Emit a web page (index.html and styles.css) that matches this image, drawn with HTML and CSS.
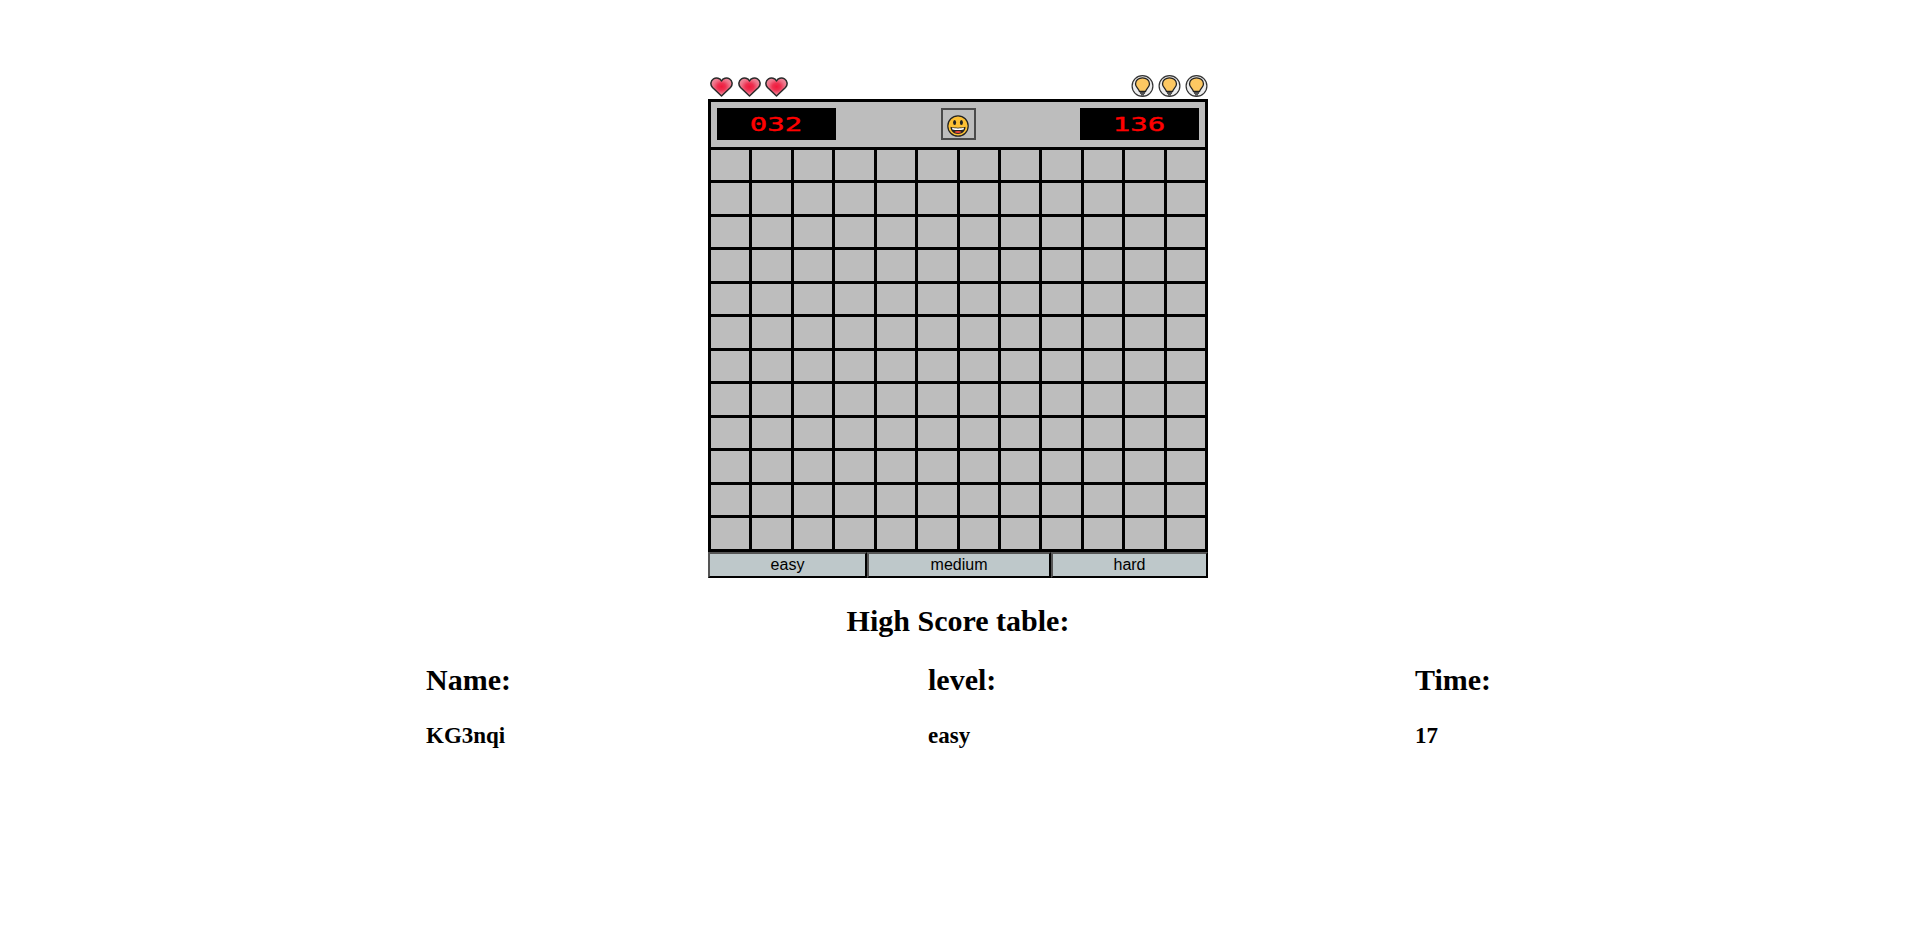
FILE: index.html
```html
<!DOCTYPE html>
<html lang="en">
<head>
    <meta charset="UTF-8">
    <meta name="viewport" content="width=device-width, initial-scale=1.0">
    <title>Minesweeper</title>
    <link rel="stylesheet" href="styles.css">
</head>
<body>
    <svg class="defs" width="0" height="0">
        <defs>
            <radialGradient id="heartFill" cx="50%" cy="48%" r="54%">
                <stop offset="0%" stop-color="#f01a3c"/>
                <stop offset="35%" stop-color="#ee3050"/>
                <stop offset="70%" stop-color="#ee7086"/>
                <stop offset="100%" stop-color="#ee8c9e"/>
            </radialGradient>
            <symbol id="heart" viewBox="0 0 23 20">
                <path d="M11.500 19 L2.500 10.500 C0 8 0.500 3.500 3.500 1.800 C6.500 0.300 10 1.300 11.500 4 C13 1.300 16.500 0.300 19.500 1.800 C22.500 3.500 23 8 20.500 10.500 Z" fill="url(#heartFill)" stroke="#2a2a2a" stroke-width="1.500" stroke-linejoin="round"/>
            </symbol>
            <symbol id="bulb" viewBox="0 0 23 22">
                <circle cx="11.500" cy="11" r="10.400" fill="#ededed" stroke="#333" stroke-width="1.200"/>
                <path d="M11.500 2.800 C7.500 2.800 4.500 5.300 4.500 9 C4.500 12 7.500 13.500 8.500 16.500 L14.500 16.500 C15.500 13.500 18.500 12 18.500 9 C18.500 5.300 15.500 2.800 11.500 2.800 Z" fill="#fdc862" stroke="#222" stroke-width="1.300"/>
                <path d="M9 18 L14 18 M10 19.800 L13 19.800" stroke="#222" stroke-width="1.300"/>
            </symbol>
        </defs>
    </svg>

    <div class="game">
        <div class="extras">
            <div class="icons hearts">
                <svg class="heart"><use href="#heart"/></svg>
                <svg class="heart"><use href="#heart"/></svg>
                <svg class="heart"><use href="#heart"/></svg>
            </div>
            <div class="icons bulbs">
                <svg class="bulb"><use href="#bulb"/></svg>
                <svg class="bulb"><use href="#bulb"/></svg>
                <svg class="bulb"><use href="#bulb"/></svg>
            </div>
        </div>
        <div class="board">
            <div class="board-header">
                <div class="display"><span>032</span></div>
                <button class="smiley">
                    <svg width="22" height="22" viewBox="0 0 22 22">
                        <circle cx="11" cy="11" r="10.200" fill="#fdc034" stroke="#222" stroke-width="1.200"/>
                        <ellipse cx="7.600" cy="7.500" rx="1.500" ry="2.500" fill="#222"/>
                        <ellipse cx="14.400" cy="7.500" rx="1.500" ry="2.500" fill="#222"/>
                        <path d="M3.500 11.800 C7 13 15 13 18.500 11.800 C18.500 16.500 15 19 11 19 C7 19 3.500 16.500 3.500 11.800 Z" fill="#222"/>
                        <path d="M5 12.800 C8 13.600 14 13.600 17 12.800 L16.600 14.500 C13.500 15.200 8.500 15.200 5.400 14.500 Z" fill="#fff"/>
                        <path d="M7.500 17 C9 15.800 13 15.800 14.500 17 C13 18.500 9 18.500 7.500 17 Z" fill="#e5403a"/>
                    </svg>
                </button>
                <div class="display"><span>136</span></div>
            </div>
            <div class="cells" id="cells"></div>
        </div>
        <div class="levels">
            <button>easy</button>
            <button>medium</button>
            <button>hard</button>
        </div>
    </div>

    <h2 class="score-title">High Score table:</h2>
    <table class="score-table">
        <thead>
            <tr>
                <th>Name:</th>
                <th>level:</th>
                <th>Time:</th>
            </tr>
        </thead>
        <tbody>
            <tr>
                <td>KG3nqi</td>
                <td>easy</td>
                <td>17</td>
            </tr>
        </tbody>
    </table>

    <script>
        const cells = document.getElementById('cells');
        for (let i = 0; i < 144; i++) {
            cells.innerHTML += '<div class="cell"></div>';
        }
    </script>
</body>
</html>
```

FILE: styles.css
```css
body {
    margin: 0 4px 0 0;
    font-family: "Liberation Serif", serif;
    background-color: white;
    color: black;
}
.defs {
    display: block;
    height: 0;
}
.game {
    width: 500px;
    margin: 0 auto;
    padding-top: 75px;
}
.extras {
    display: flex;
    justify-content: space-between;
    align-items: flex-end;
    padding: 0 0 2px 2px;
}
.icons {
    display: flex;
}
.hearts {
    gap: 4.500px;
}
.bulbs {
    gap: 4px;
}
.heart {
    width: 23px;
    height: 20px;
    display: block;
}
.bulb {
    width: 23px;
    height: 22px;
    display: block;
}
.board {
    border: 3px solid black;
    background-color: #bdbdbd;
}
.board-header {
    display: flex;
    justify-content: space-between;
    align-items: flex-start;
    height: 38.750px;
    padding: 6px 6px 0;
    border-bottom: 3px solid black;
}
.display {
    width: 119px;
    height: 32px;
    background-color: black;
    color: red;
    display: flex;
    align-items: center;
    justify-content: center;
}
.display span {
    font-family: "DejaVu Sans Mono", monospace;
    font-size: 20px;
    -webkit-text-stroke: 0.400px red;
    transform: scaleX(1.450);
}
.smiley {
    width: 35px;
    height: 32px;
    padding: 3px 0 0;
    background-color: #bdbdbd;
    border: 2px solid #4a4a4a;
    display: flex;
    align-items: center;
    justify-content: center;
}
.cells {
    display: grid;
    grid-template-columns: repeat(12, 1fr);
    grid-auto-rows: 30.500px;
    gap: 3px;
    background-color: black;
}
.cell {
    background-color: #bdbdbd;
}
.levels {
    display: grid;
    grid-template-columns: 159px 184px 157px;
}
.levels button {
    height: 26px;
    padding: 0;
    background-color: #bec8ca;
    border: 2px solid;
    border-color: #555 black black #555;
    font-family: "Liberation Sans", sans-serif;
    font-size: 16px;
    color: black;
}
.score-title {
    margin: 26px 0 0;
    text-align: center;
    font-size: 30px;
}
.score-table {
    width: 1066px;
    margin: 15px 0 0 426px;
    border-spacing: 0;
    text-align: left;
}
.score-table th {
    font-size: 30px;
    padding: 10px 0;
}
.score-table th:nth-child(1) {
    width: 502px;
}
.score-table th:nth-child(2) {
    width: 487px;
}
.score-table td {
    font-size: 23px;
    font-weight: bold;
    padding: 16px 0;
}
```
